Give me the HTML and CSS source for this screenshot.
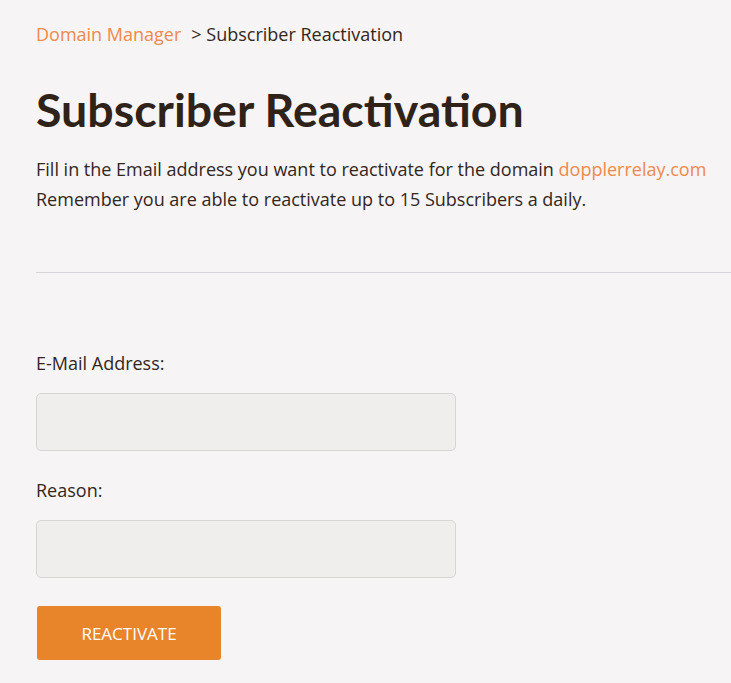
FILE: index.html
```html
<!DOCTYPE html>
<html lang="en">
<head>
<meta charset="utf-8">
<title>Subscriber Reactivation</title>
<link rel="stylesheet" href="styles.css">
</head>
<body>
<main class="page">
  <nav class="breadcrumb">
    <a class="crumb-link" href="#">Domain Manager</a>
    <span class="crumb-current">&gt; Subscriber Reactivation</span>
  </nav>
  <h1 class="title">Subscriber Reactivation</h1>
  <p class="intro">Fill in the Email address you want to reactivate for the domain <a class="domain" href="#">dopplerrelay.com</a><br>Remember you are able to reactivate up to 15 Subscribers a daily.</p>
  <hr class="divider">
  <form class="form">
    <label class="field">
      <span class="label">E-Mail Address:</span>
      <input class="input" type="text">
    </label>
    <label class="field">
      <span class="label">Reason:</span>
      <input class="input" type="text">
    </label>
    <button class="button" type="button">REACTIVATE</button>
  </form>
</main>
</body>
</html>
```
FILE: styles.css
```css
html, body {
  margin: 0;
  padding: 0;
  background: #f6f4f4;
}
body {
  font-family: "Open Sans", "Noto Sans", sans-serif;
  color: #33261d;
  overflow: hidden;
}
.page {
  padding: 23px 0 0 36px;
}
.breadcrumb {
  font-size: 18px;
  line-height: 22px;
  display: flex;
  gap: 10px;
}
.crumb-link {
  color: #ee8a4c;
  text-decoration: none;
}
.crumb-current {
  color: #33261d;
}
.title {
  margin: 37px 0 0;
  font-family: Lato, "Open Sans", sans-serif;
  font-size: 46.5px;
  line-height: 54px;
  font-weight: 700;
  color: #2f2218;
}
.intro {
  margin: 18px 0 0;
  font-size: 18px;
  line-height: 30px;
}
.domain {
  color: #ee8a4c;
  text-decoration: none;
}
.divider {
  margin: 58px 0 0;
  border: 0;
  border-top: 1px solid #d6d6da;
  height: 0;
}
.form {
  display: flex;
  flex-direction: column;
  padding-top: 79px;
}
.field {
  display: flex;
  flex-direction: column;
}
.label {
  font-size: 18px;
  line-height: 22px;
  margin-bottom: 19px;
}
.input {
  box-sizing: border-box;
  width: 420px;
  height: 58px;
  margin: 0 0 28px;
  background: #efeeec;
  border: 1px solid #d6d5d3;
  border-radius: 5px;
  font: inherit;
}
.button {
  box-sizing: border-box;
  width: 184px;
  height: 54px;
  margin-left: 1px;
  background: #e8842a;
  border: 0;
  border-radius: 3px;
  color: #fff;
  font-family: inherit;
  font-size: 17px;
}
```
